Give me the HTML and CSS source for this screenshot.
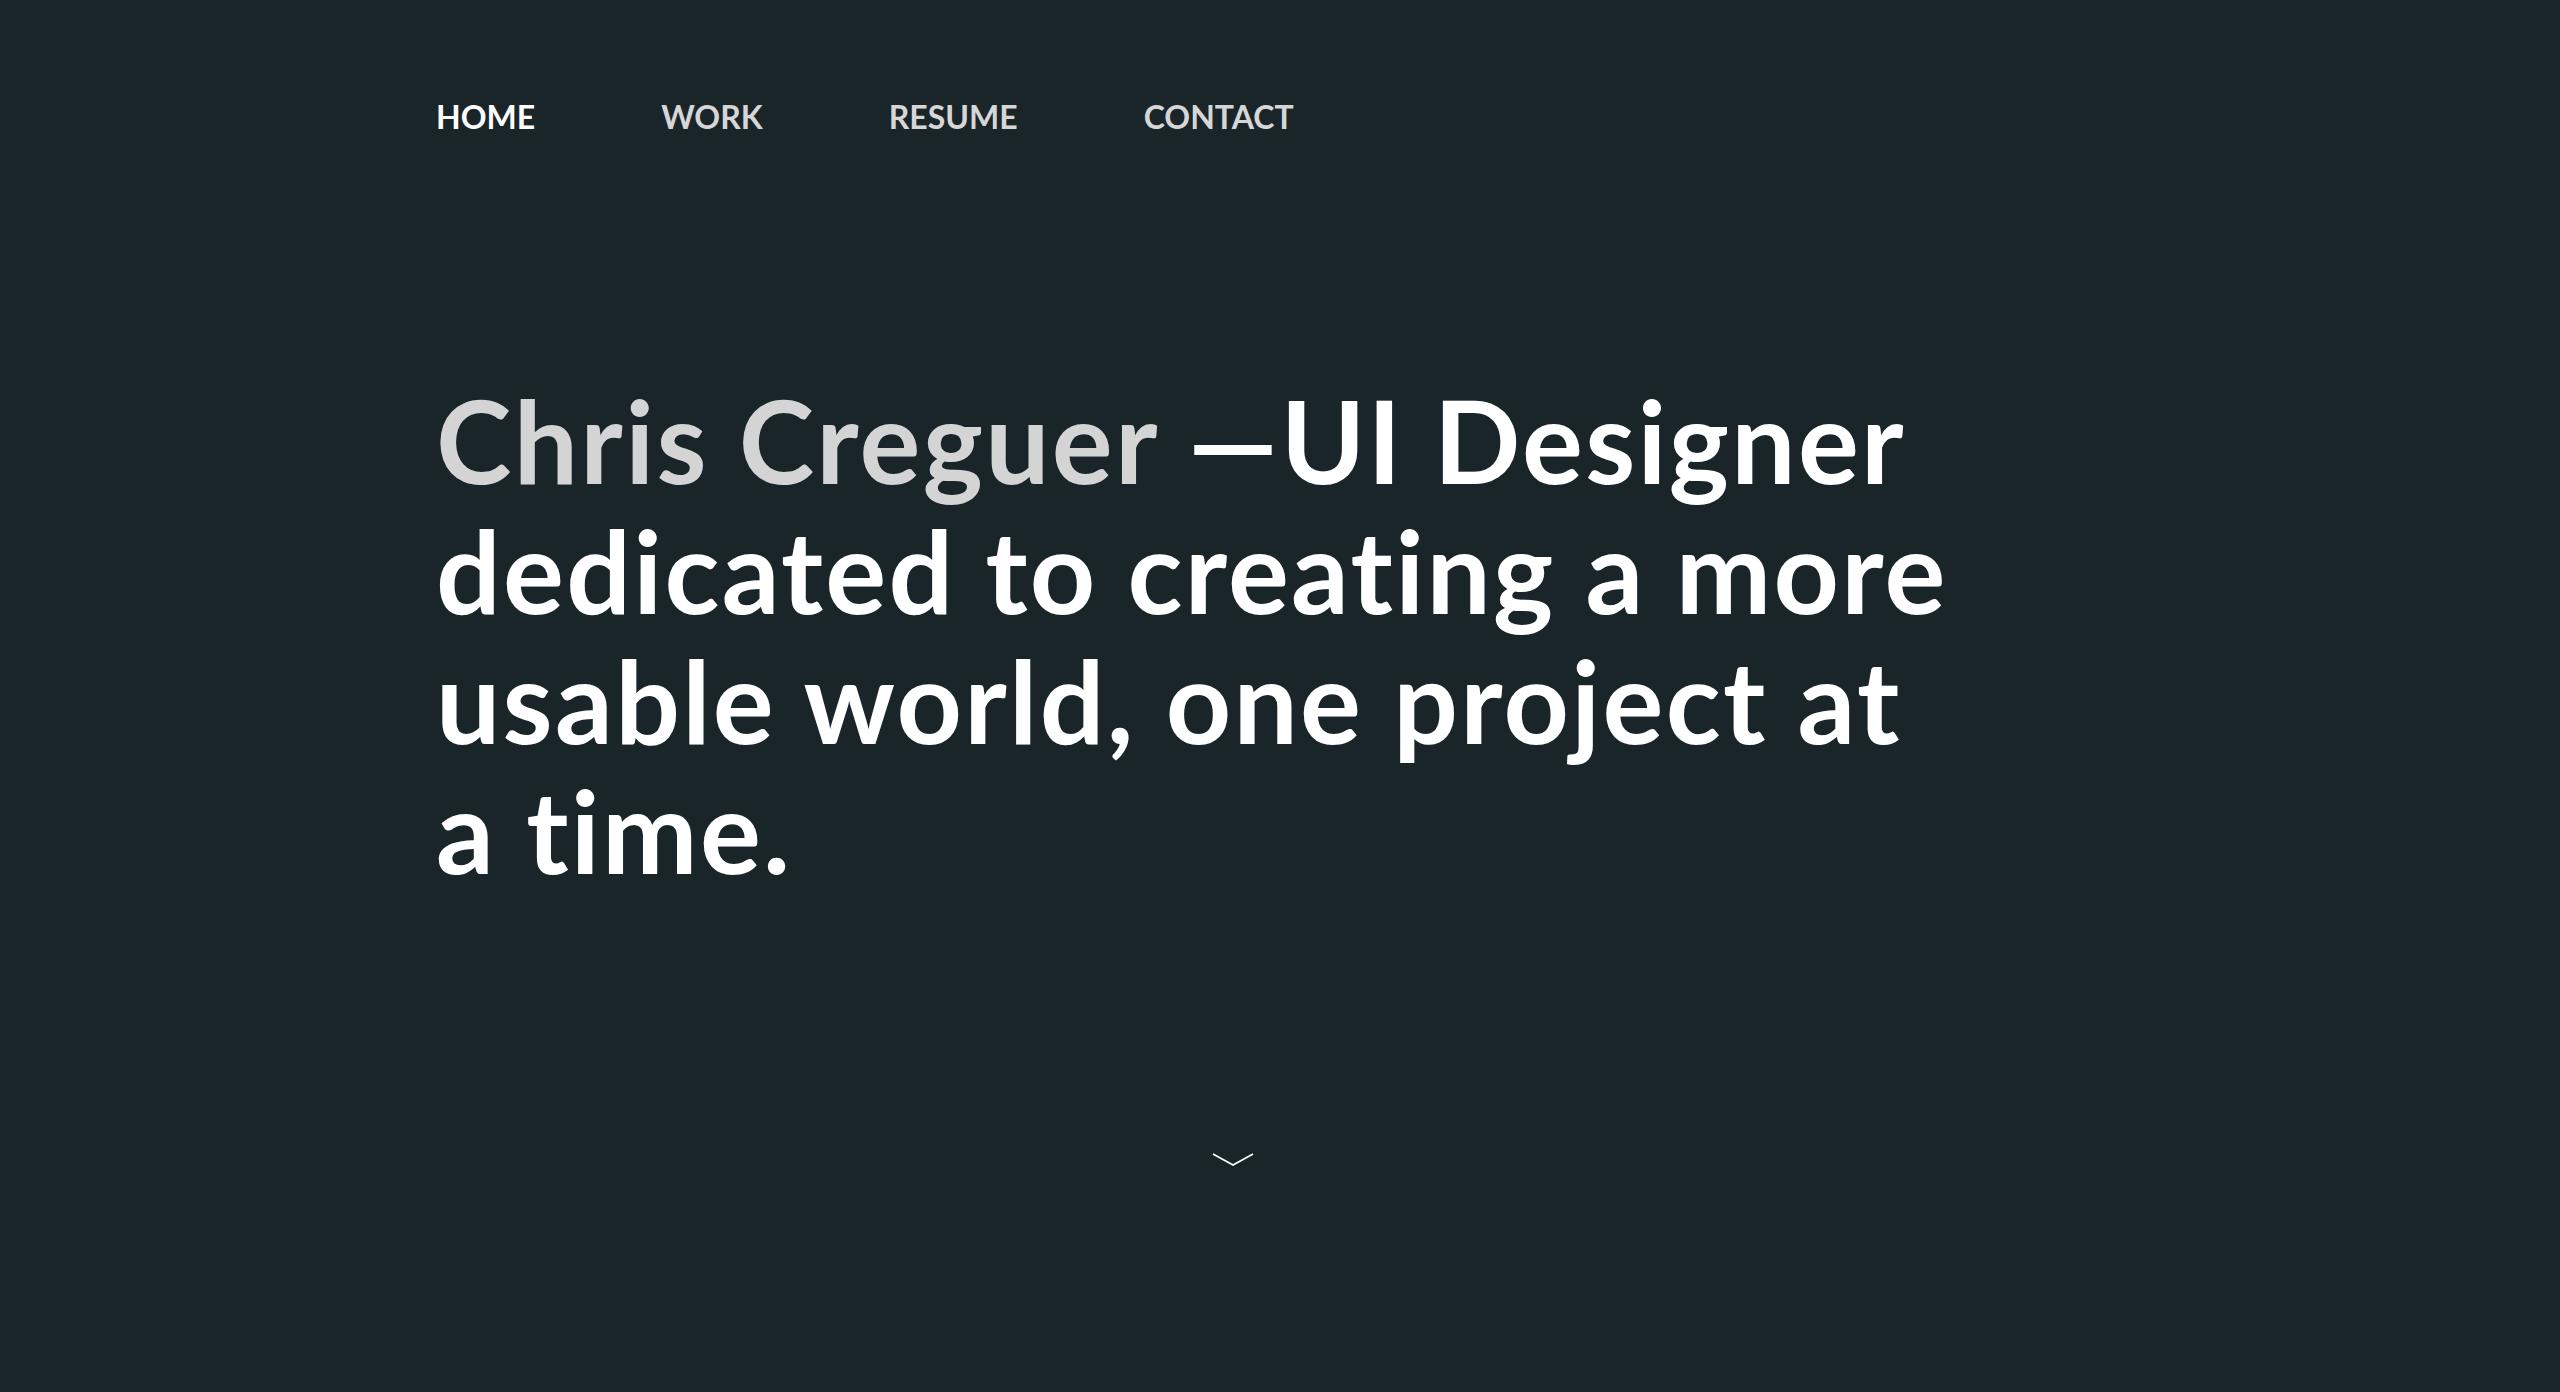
FILE: index.html
```html
<!DOCTYPE html>
<html lang="en">
<head>
<meta charset="utf-8">
<title>Chris Creguer</title>
<link rel="stylesheet" href="styles.css">
</head>
<body>
<div class="page">
  <nav class="nav">
    <a class="nav-link active" href="#">HOME</a>
    <a class="nav-link" href="#">WORK</a>
    <a class="nav-link" href="#">RESUME</a>
    <a class="nav-link" href="#">CONTACT</a>
  </nav>
  <main class="hero">
    <h1 class="headline"><span class="name">Chris Creguer</span> —UI Designer<br>dedicated to creating a more<br>usable world, one project at<br>a time.</h1>
  </main>
  <div class="scroll">
    <svg class="chevron" width="42" height="14" viewBox="0 0 42 14"><polyline points="1,1 21,12 41,1" fill="none" stroke="#fff" stroke-width="1.8"/></svg>
  </div>
</div>
</body>
</html>
```

FILE: styles.css
```css
html, body {
  margin: 0;
  padding: 0;
  background: #1a252a;
  height: 100%;
}
.page {
  width: 1594px;
  height: 1392px;
  box-sizing: border-box;
  margin-left: 436px;
  display: flex;
  flex-direction: column;
  font-family: Lato, "Noto Sans", sans-serif;
}
.nav {
  display: flex;
  gap: 126px;
  padding-top: 97px;
}
.nav-link {
  color: #d6d6d6;
  text-decoration: none;
  font-weight: 700;
  font-size: 32px;
  line-height: 40px;
}
.nav-link.active {
  color: #ffffff;
}
.hero {
  margin-top: 238px;
}
.headline {
  margin: 0;
  color: #ffffff;
  font-weight: 700;
  font-size: 114px;
  line-height: 130px;
  letter-spacing: 2.3px;
  font-variant-ligatures: none;
}
.name {
  color: #d4d4d4;
}
.scroll {
  display: flex;
  justify-content: center;
  padding-top: 258px;
}
.chevron {
  display: block;
}
```
